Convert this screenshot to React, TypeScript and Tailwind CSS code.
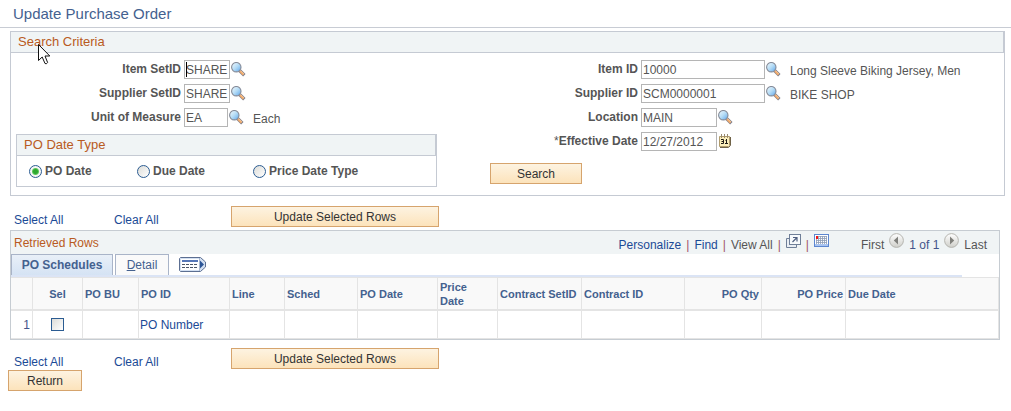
import React, { useState } from 'react'

type FieldProps = {
  id: string
  label: string
  value: string
  inputClass: string
  labelClass: string
  required?: boolean
  caret?: boolean
  note?: string
  icon?: 'lookup' | 'calendar'
}

const LookupIcon = () => (
  <svg className="block h-[15px] w-[15px]" viewBox="0 0 15 15" aria-hidden="true">
    <defs>
      <linearGradient id="lens" x1="0" y1="0" x2="1" y2="1">
        <stop offset="0" stopColor="#f2fafe" />
        <stop offset="0.5" stopColor="#b5dcf6" />
        <stop offset="1" stopColor="#5ba5ec" />
      </linearGradient>
    </defs>
    <path d="M8.8 8.8L13.3 13.3" stroke="#7d7f8c" strokeWidth="3.4" />
    <path d="M9 9L12.6 12.6" stroke="#f0a868" strokeWidth="2.2" />
    <path d="M9.2 8.4L13 12.2" stroke="#fbd5ae" strokeWidth="0.7" />
    <circle cx="5.3" cy="5.2" r="4.7" fill="url(#lens)" stroke="#858b98" strokeWidth="1.1" />
  </svg>
)

const CalendarIcon = () => (
  <svg className="block h-[14px] w-[13px]" viewBox="0 0 13 14" aria-hidden="true">
    <path d="M0.5 2.5H10.5V11.5L9.5 12.5H0.5Z" fill="#fbeebb" stroke="#b09b6c" />
    <path d="M11.5 3V11.5L9.5 13.5H1" fill="none" stroke="#6f6247" />
    <path d="M2.5 0V4M5.5 0V4M8.5 0V4" stroke="#9a8c70" />
    <path d="M2 5.5H4.5V9.5H2M2.5 7.5H4.5M6.5 6.5H7.5M7.5 5V9.5M6 9.5H9" fill="none" stroke="#1d1a14" />
  </svg>
)

const ArrowIcon = ({ back = false }: { back?: boolean }) => (
  <svg className="block h-[15px] w-[15px]" viewBox="0 0 15 15" aria-hidden="true">
    <defs>
      <linearGradient id="knob" x1="0" y1="0" x2="0" y2="1">
        <stop offset="0" stopColor="#ffffff" />
        <stop offset="1" stopColor="#cfcfca" />
      </linearGradient>
    </defs>
    <circle cx="7.5" cy="7.5" r="6.9" fill="url(#knob)" stroke="#b5b5b0" />
    <path d={back ? 'M9 3.5V11.5L4.8 7.5Z' : 'M6 3.5V11.5L10.2 7.5Z'} fill="#80807c" />
  </svg>
)

const PopupIcon = () => (
  <svg className="block h-[14px] w-[15px]" viewBox="0 0 15 14" aria-hidden="true">
    <path d="M3 4.5H0.5V13.5H10.5V11" fill="#e9eef4" stroke="#6f7f98" />
    <rect x="3.5" y="0.5" width="11" height="10" fill="#f7fafc" stroke="#6f7f98" />
    <path d="M6.5 8L11 3.5M7 3.5H11V7.5" fill="none" stroke="#4f5f80" strokeWidth="1.2" />
  </svg>
)

const SpreadsheetIcon = () => (
  <svg className="block h-[13px] w-[15px]" viewBox="0 0 15 13" aria-hidden="true">
    <rect x="0.5" y="0.5" width="14" height="12" fill="#fff" stroke="#5c86d0" />
    <path d="M2 4.5H13M2 6.5H13M2 8.5H13M4.5 2V10M6.5 2V10M8.5 2V10M10.5 2V10M12.5 2V10M2.5 2V10M2 2.5H13" stroke="#8c9bb5" strokeWidth="0.8" />
    <path d="M1 11H14" stroke="#a9c4f0" strokeWidth="2" />
    <rect x="2" y="2" width="2" height="3" fill="#f01818" />
  </svg>
)

const ShowAllColumnsIcon = () => (
  <svg className="block h-[15px] w-[27px]" viewBox="0 0 27 15" aria-hidden="true">
    <path d="M1.5 0.5H21.5L26.5 5V10L21.5 14.5H1.5L0.5 13.5V1.5Z" fill="#d3e0f2" stroke="#5c6f92" />
    <rect x="2" y="2" width="18" height="11" fill="#fff" />
    <rect x="3" y="3" width="16" height="2" fill="#5677b8" />
    <path d="M3 7.5H6M7 7.5H10M11 7.5H14M15 7.5H18M3 10.5H6M7 10.5H10M11 10.5H14M15 10.5H18" stroke="#4a5568" />
    <path d="M20.5 1V14" stroke="#a9b8d0" />
    <path d="M21 3.5V11.5L25 7.5Z" fill="#2b5597" />
  </svg>
)

const MousePointer = () => (
  <svg className="pointer-events-none absolute top-[12px] left-[27px] h-[21px] w-[13px]" viewBox="0 0 13 21" aria-hidden="true">
    <path d="M0.5 0.5V16.5L4.2 13L7 19.5Q8.5 20.5 9.6 18.5L7 12H11.8Z" fill="#fff" stroke="#111" />
  </svg>
)

const Field: React.FC<FieldProps> = ({ id, label, value, inputClass, labelClass, required, caret, note, icon = 'lookup' }) => {
  const [text, setText] = useState(value)

  return (
    <div className="flex h-6 items-center">
      <label htmlFor={id} className={`shrink-0 pr-[3px] text-right font-bold ${labelClass}`}>
        {required && <span className="font-normal">*</span>}
        {label}
      </label>
      <span className="relative flex shrink-0">
        <input
          id={id}
          value={text}
          onChange={e => setText(e.target.value)}
          className={`h-[19px] border border-[#b5b5b5] bg-white px-px pt-0.5 text-[#555555] outline-none ${inputClass}`}
        />
        {caret && <span className="absolute top-0.5 left-0.5 h-[15px] w-px bg-black" />}
      </span>
      <button type="button" aria-label={`${label} ${icon}`} className="ml-px shrink-0">
        {icon === 'lookup' ? <LookupIcon /> : <span className="block pl-px"><CalendarIcon /></span>}
      </button>
      {note && <span className="ml-[9px] pt-1 whitespace-nowrap">{note}</span>}
    </div>
  )
}

const Button = ({ children, className }: { children: React.ReactNode; className: string }) => (
  <button
    type="button"
    className={`h-[21px] border border-[#d6a46d] bg-gradient-to-b from-[#fdf3e1] to-[#fce3bb] text-[12px] leading-4 text-[#333333] ${className}`}
  >
    {children}
  </button>
)

const RowActions = () => (
  <div className="flex h-[21px] pl-[14px]">
    <a href="#" className="mt-[7px] w-[100px] text-[#1b4a96]">Select All</a>
    <a href="#" className="mt-[7px] w-[117px] text-[#1b4a96]">Clear All</a>
    <Button className="w-[208px]">Update Selected Rows</Button>
  </div>
)

const dateTypes = [
  { id: 'po', label: 'PO Date', width: 'w-[108px]' },
  { id: 'due', label: 'Due Date', width: 'w-[116px]' },
  { id: 'price', label: 'Price Date Type', width: 'w-[120px]' },
]

const columns = [
  { label: '', width: 'w-[22px]', align: 'text-right px-0.5' },
  { label: 'Sel', width: 'w-[50px]', align: 'text-center px-0.5' },
  { label: 'PO BU', width: 'w-[56px]', align: 'text-left px-0.5' },
  { label: 'PO ID', width: 'w-[91px]', align: 'text-left px-0.5' },
  { label: 'Line', width: 'w-[55px]', align: 'text-left px-0.5' },
  { label: 'Sched', width: 'w-[73px]', align: 'text-left px-0.5' },
  { label: 'PO Date', width: 'w-[80px]', align: 'text-left px-0.5' },
  { label: 'Price Date', width: 'w-[60px]', align: 'text-left pl-0.5 pr-3' },
  { label: 'Contract SetID', width: 'w-[84px]', align: 'text-left px-0.5 whitespace-nowrap' },
  { label: 'Contract ID', width: 'w-[103px]', align: 'text-left px-0.5' },
  { label: 'PO Qty', width: 'w-[77px]', align: 'text-right px-0.5' },
  { label: 'PO Price', width: 'w-[84px]', align: 'text-right px-0.5' },
  { label: 'Due Date', width: '', align: 'text-left px-0.5' },
]

const rows = [{ number: 1, poId: 'PO Number' }]

export default function App() {
  const [dateType, setDateType] = useState('po')

  return (
    <main className="bg-white font-['Liberation_Sans',Arial,sans-serif] text-[12px] leading-[14px] text-[#555555]">
      <h1 className="h-7 border-b border-[#c8ccd4] pt-1 pl-[13px] text-[15px] leading-5 text-[#44618f]">
        Update Purchase Order
      </h1>

      {/* Search criteria */}
      <section className="relative mt-[3px] mr-[6px] ml-[10px] border border-[#c5cad3]">
        <h2 className="h-[21px] border-r border-b border-[#c5cad3] bg-[#f0f4f5] pl-[7px] text-[13px] leading-5 text-[#b95a22]">
          Search Criteria
        </h2>
        <MousePointer />
        <div className="flex pt-1 pb-2">
          <div className="w-[479px] shrink-0 pl-[5px]">
            <Field id="item-setid" label="Item SetID" value="SHARE" labelClass="w-[168px]" inputClass="w-[46px]" caret />
            <Field id="supplier-setid" label="Supplier SetID" value="SHARE" labelClass="w-[168px]" inputClass="w-[46px]" />
            <Field id="uom" label="Unit of Measure" value="EA" labelClass="w-[168px]" inputClass="w-[44px]" note="Each" />

            <fieldset className="mt-[5px] w-[421px] border border-[#c5cad3]" aria-label="PO Date Type">
              <h3 className="h-[21px] border-r border-b border-[#c5cad3] bg-[#f0f4f5] pl-[7px] text-[13px] leading-5 text-[#b95a22]">
                PO Date Type
              </h3>
              <div className="flex h-[30px] items-center pl-3">
                {dateTypes.map(type => (
                  <label key={type.id} className={`flex items-center gap-[3px] font-bold ${type.width}`}>
                    <input
                      type="radio"
                      name="date-type"
                      checked={dateType === type.id}
                      onChange={() => setDateType(type.id)}
                      className="h-[13px] w-[13px] appearance-none rounded-full border border-[#2b5c92] bg-gradient-to-br from-[#dcdcd8] to-white checked:border-[#2b5c92] checked:bg-[radial-gradient(circle,#2fa82f_2px,#5cc85c_3px,#f6f6f4_4px)]"
                    />
                    <span>{type.label}</span>
                  </label>
                ))}
              </div>
            </fieldset>
          </div>

          <div className="min-w-0 flex-1">
            <Field id="item-id" label="Item ID" value="10000" labelClass="w-[151px]" inputClass="w-[124px]" note="Long Sleeve Biking Jersey, Men" />
            <Field id="supplier-id" label="Supplier ID" value="SCM0000001" labelClass="w-[151px]" inputClass="w-[124px]" note="BIKE SHOP" />
            <Field id="location" label="Location" value="MAIN" labelClass="w-[151px]" inputClass="w-[76px]" />
            <Field id="effective-date" label="Effective Date" value="12/27/2012" labelClass="w-[151px]" inputClass="w-[76px]" icon="calendar" required />
            <Button className="mt-[10px] block w-[92px]">Search</Button>
          </div>
        </div>
      </section>

      <div className="mt-[10px]">
        <RowActions />
      </div>

      {/* Retrieved rows */}
      <section className="mt-[3px] mr-[11px] ml-[10px] border border-[#c6ccd2]">
        <div className="flex h-[23px] items-center bg-[#f0f4f5] pr-3 pl-[3px]">
          <h2 className="flex-1 text-[12px] text-[#b95a22]">Retrieved Rows</h2>
          <div className="flex items-center pt-1">
            <a href="#" className="text-[#1b4a96]">Personalize</a>
            <span className="px-[5px] text-[#a0506a]">|</span>
            <a href="#" className="text-[#1b4a96]">Find</a>
            <span className="px-[5px] text-[#a0506a]">|</span>
            <span>View All</span>
            <span className="px-[5px] text-[#a0506a]">|</span>
            <button type="button" aria-label="Zoom grid" className="mb-2"><PopupIcon /></button>
            <span className="px-[5px] text-[#a0506a]">|</span>
            <button type="button" aria-label="Download" className="mb-2"><SpreadsheetIcon /></button>
          </div>
          <div className="ml-8 flex items-center gap-[5px] pt-1">
            <span>First</span>
            <button type="button" aria-label="Previous" className="mb-2"><ArrowIcon back /></button>
            <span className="text-[#44548a]">1 of 1</span>
            <button type="button" aria-label="Next" className="mb-2"><ArrowIcon /></button>
            <span>Last</span>
          </div>
        </div>

        <div className="mr-[37px] flex h-[23px] border-b-2 border-[#dbe4f5] text-[#44618f]" role="tablist">
          <button type="button" role="tab" aria-selected="true" className="w-[102px] border border-b-0 border-[#a9b4c8] bg-gradient-to-b from-[#e9f0f8] to-[#d5e3f4] font-bold">
            PO Schedules
          </button>
          <button type="button" role="tab" aria-selected="false" className="ml-0.5 w-[54px] border border-b-0 border-[#a9b4c8] bg-[#fafafa]">
            <u>D</u>etail
          </button>
          <button type="button" aria-label="Show all columns" className="ml-[10px]">
            <ShowAllColumnsIcon />
          </button>
        </div>

        <table className="w-full table-fixed border-separate border-spacing-0">
          <thead>
            <tr className="h-[34px] bg-[#f9f9f9]">
              {columns.map((col, i) => (
                <th
                  key={i}
                  scope="col"
                  className={`border-t border-r border-b-2 border-[#e4e4e4] py-0 text-[11px] leading-[14px] font-bold text-[#44618f] ${col.width} ${col.align}`}
                >
                  {col.label}
                </th>
              ))}
            </tr>
          </thead>
          <tbody>
            {rows.map(row => (
              <tr key={row.number} className="h-7 text-[#44548a]">
                <td className="border-r border-b border-[#e4e4e4] p-0 pr-0.5 text-right">{row.number}</td>
                <td className="border-r border-b border-[#e4e4e4] p-0">
                  <input
                    type="checkbox"
                    aria-label={`Select row ${row.number}`}
                    className="mx-auto block h-[13px] w-[13px] appearance-none border border-[#2b5c92] bg-gradient-to-br from-[#dcdcd8] to-white checked:bg-none checked:bg-[#2fa82f]"
                  />
                </td>
                <td className="border-r border-b border-[#e4e4e4] p-0" />
                <td className="border-r border-b border-[#e4e4e4] p-0 pl-px">
                  <a href="#" className="text-[#1b4a96]">{row.poId}</a>
                </td>
                {columns.slice(4).map(col => (
                  <td key={col.label} className="border-r border-b border-[#e4e4e4] p-0" />
                ))}
              </tr>
            ))}
          </tbody>
        </table>
      </section>

      <div className="mt-2">
        <RowActions />
      </div>
      <Button className="mt-px ml-2 block w-[74px]">Return</Button>
    </main>
  )
}
